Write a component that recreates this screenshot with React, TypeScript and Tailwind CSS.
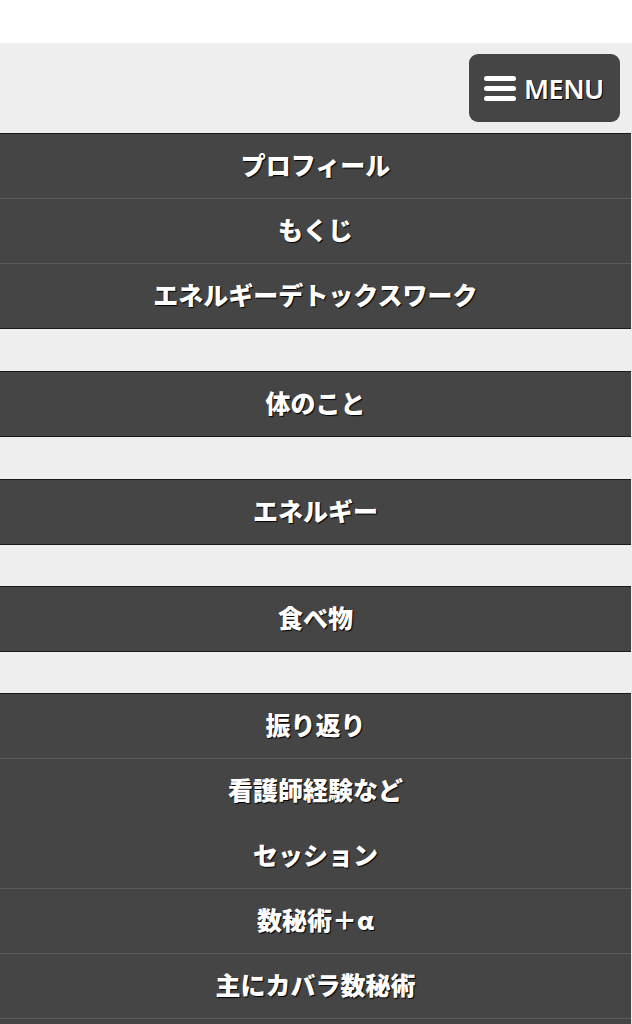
import React from "react";

type Item = { label: string; noDivider?: boolean };

const groups: Item[][] = [
  [{ label: "プロフィール" }, { label: "もくじ" }, { label: "エネルギーデトックスワーク" }],
  [{ label: "体のこと" }],
  [{ label: "エネルギー" }],
  [{ label: "食べ物" }],
  [
    { label: "振り返り" },
    { label: "看護師経験など", noDivider: true },
    { label: "セッション" },
    { label: "数秘術＋α" },
    { label: "主にカバラ数秘術" },
    { label: "" },
  ],
];

const gaps = ["mt-0", "mt-[42px]", "mt-[42px]", "mt-[41px]", "mt-[41px]"];

export default function App() {
  return (
    <div className="w-[632px] h-[1024px] overflow-hidden bg-white font-['Noto_Sans_CJK_JP',sans-serif]">
      <div className="h-[43px] bg-white" />
      <div className="bg-[#eeeeee] pb-[60px]">
        <div className="h-[90px] flex items-center justify-end pr-[12px]">
          <div className="w-[151px] h-[68px] rounded-[9px] bg-[#454545] flex items-center pl-[15px] gap-[8px]">
            <div className="flex flex-col gap-[5px]">
              <div className="w-[32px] h-[5px] rounded-full bg-white" />
              <div className="w-[32px] h-[5px] rounded-full bg-white" />
              <div className="w-[32px] h-[5px] rounded-full bg-white" />
            </div>
            <span className="text-white text-[27px] leading-none font-['Noto_Sans',sans-serif] font-semibold tracking-[-0.5px] [text-shadow:1px_1px_0_#000]">
              MENU
            </span>
          </div>
        </div>
        {groups.map((g, gi) => (
          <div key={gi} className={`${gaps[gi]} w-[631px] bg-[#454545] border-t border-[#1a1a1a]`}>
            {g.map((it, ii) => (
              <div
                key={ii}
                className={`h-[65px] pb-[3px] flex items-center justify-center border-b ${
                  ii === g.length - 1
                    ? "border-[#1a1a1a]"
                    : it.noDivider
                    ? "border-[#454545]"
                    : "border-[#5a5a5a]"
                }`}
              >
                {it.label && (
                  <span className="text-white text-[25px] leading-none font-black [text-shadow:1px_1px_1px_#000]">
                    {it.label}
                  </span>
                )}
              </div>
            ))}
          </div>
        ))}
      </div>
    </div>
  );
}
